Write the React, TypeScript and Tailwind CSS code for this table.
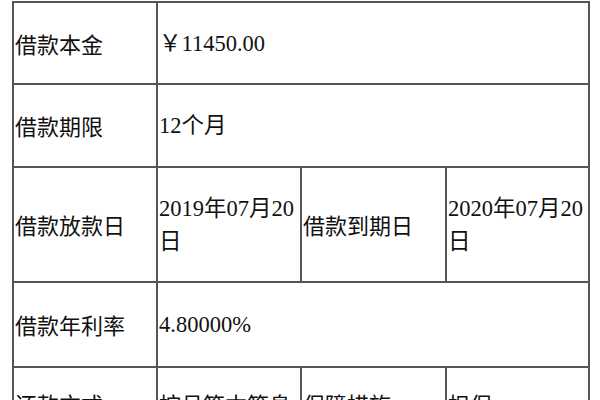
const label = "border-2 border-[#555] px-[1px] align-middle text-[22px] leading-[33px] text-[#111] font-['Noto_Sans_CJK_SC',sans-serif]"
const value = "border-2 border-[#555] px-[1px] align-middle text-[22.5px] leading-[33px] text-[#111] font-['Liberation_Serif','Noto_Sans_CJK_SC',serif]"

export default function App() {
  return (
    <div className="w-[600px] h-[400px] overflow-hidden bg-white pl-[12px] pt-[1px]">
      <table className="table-fixed border-collapse w-[576px]">
        <colgroup>
          <col className="w-[144px]" />
          <col className="w-[144px]" />
          <col className="w-[145px]" />
          <col className="w-[143px]" />
        </colgroup>
        <tbody>
          <tr className="h-[82px]">
            <td className={label}>借款本金</td>
            <td className={value} colSpan={3}>￥11450.00</td>
          </tr>
          <tr className="h-[83px]">
            <td className={label}>借款期限</td>
            <td className={value} colSpan={3}>12个月</td>
          </tr>
          <tr className="h-[115px]">
            <td className={label}>借款放款日</td>
            <td className={value}>2019年07月20日</td>
            <td className={label}>借款到期日</td>
            <td className={value}>2020年07月20日</td>
          </tr>
          <tr className="h-[85px]">
            <td className={label}>借款年利率</td>
            <td className={value} colSpan={3}>4.80000%</td>
          </tr>
          <tr className="h-[72px]">
            <td className={label}>还款方式</td>
            <td className={label}>按月等本等息</td>
            <td className={label}>保障措施</td>
            <td className={label}>担保</td>
          </tr>
        </tbody>
      </table>
    </div>
  )
}
